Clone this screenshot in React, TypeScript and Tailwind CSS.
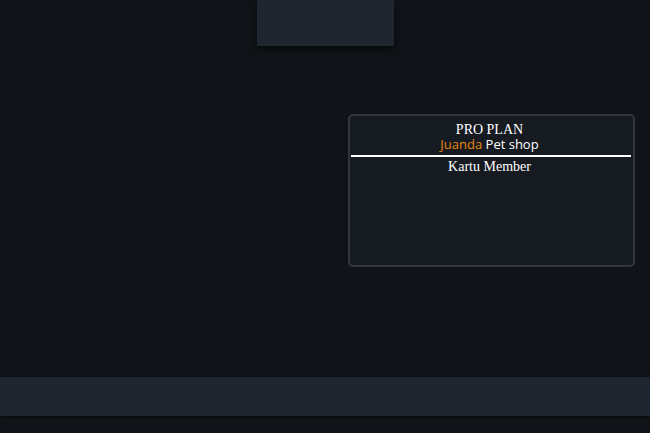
export default function App() {
  return (
    <div className="flex h-[433px] w-[650px] flex-col overflow-hidden bg-[#101418]">
      {/* top tab */}
      <div className="mx-auto h-[46px] w-[137px] shrink-0 bg-[#1f2630] shadow-[0_3px_6px_rgba(0,0,0,0.6)]" />

      {/* member card */}
      <div className="ml-[348px] mt-[68px] flex h-[153px] w-[287px] shrink-0 flex-col rounded-[5px] border-2 border-[#33373b] bg-[#161a21] pl-[1px] pr-[2px] pt-[6px]">
        <div className="pr-[3px] text-center text-[14px] leading-[15px] text-white font-['Liberation_Serif',serif]">
          PRO PLAN
        </div>
        <div className="pr-[3px] text-center text-[13px] leading-[15px] font-medium text-white font-['Open_Sans',sans-serif]">
          <span className="text-[#e8860f]">Juanda</span> Pet shop
        </div>
        <div className="mt-[3px] h-[2px] bg-white" />
        <div className="mt-[2px] pr-[3px] text-center text-[14px] leading-[16px] text-white font-['Liberation_Serif',serif]">
          Kartu Member
        </div>
      </div>

      {/* bottom bar */}
      <div className="mt-[110px] h-[39px] shrink-0 bg-[#1f2630] shadow-[0_1px_3px_rgba(0,0,0,0.6)]" />
    </div>
  );
}
